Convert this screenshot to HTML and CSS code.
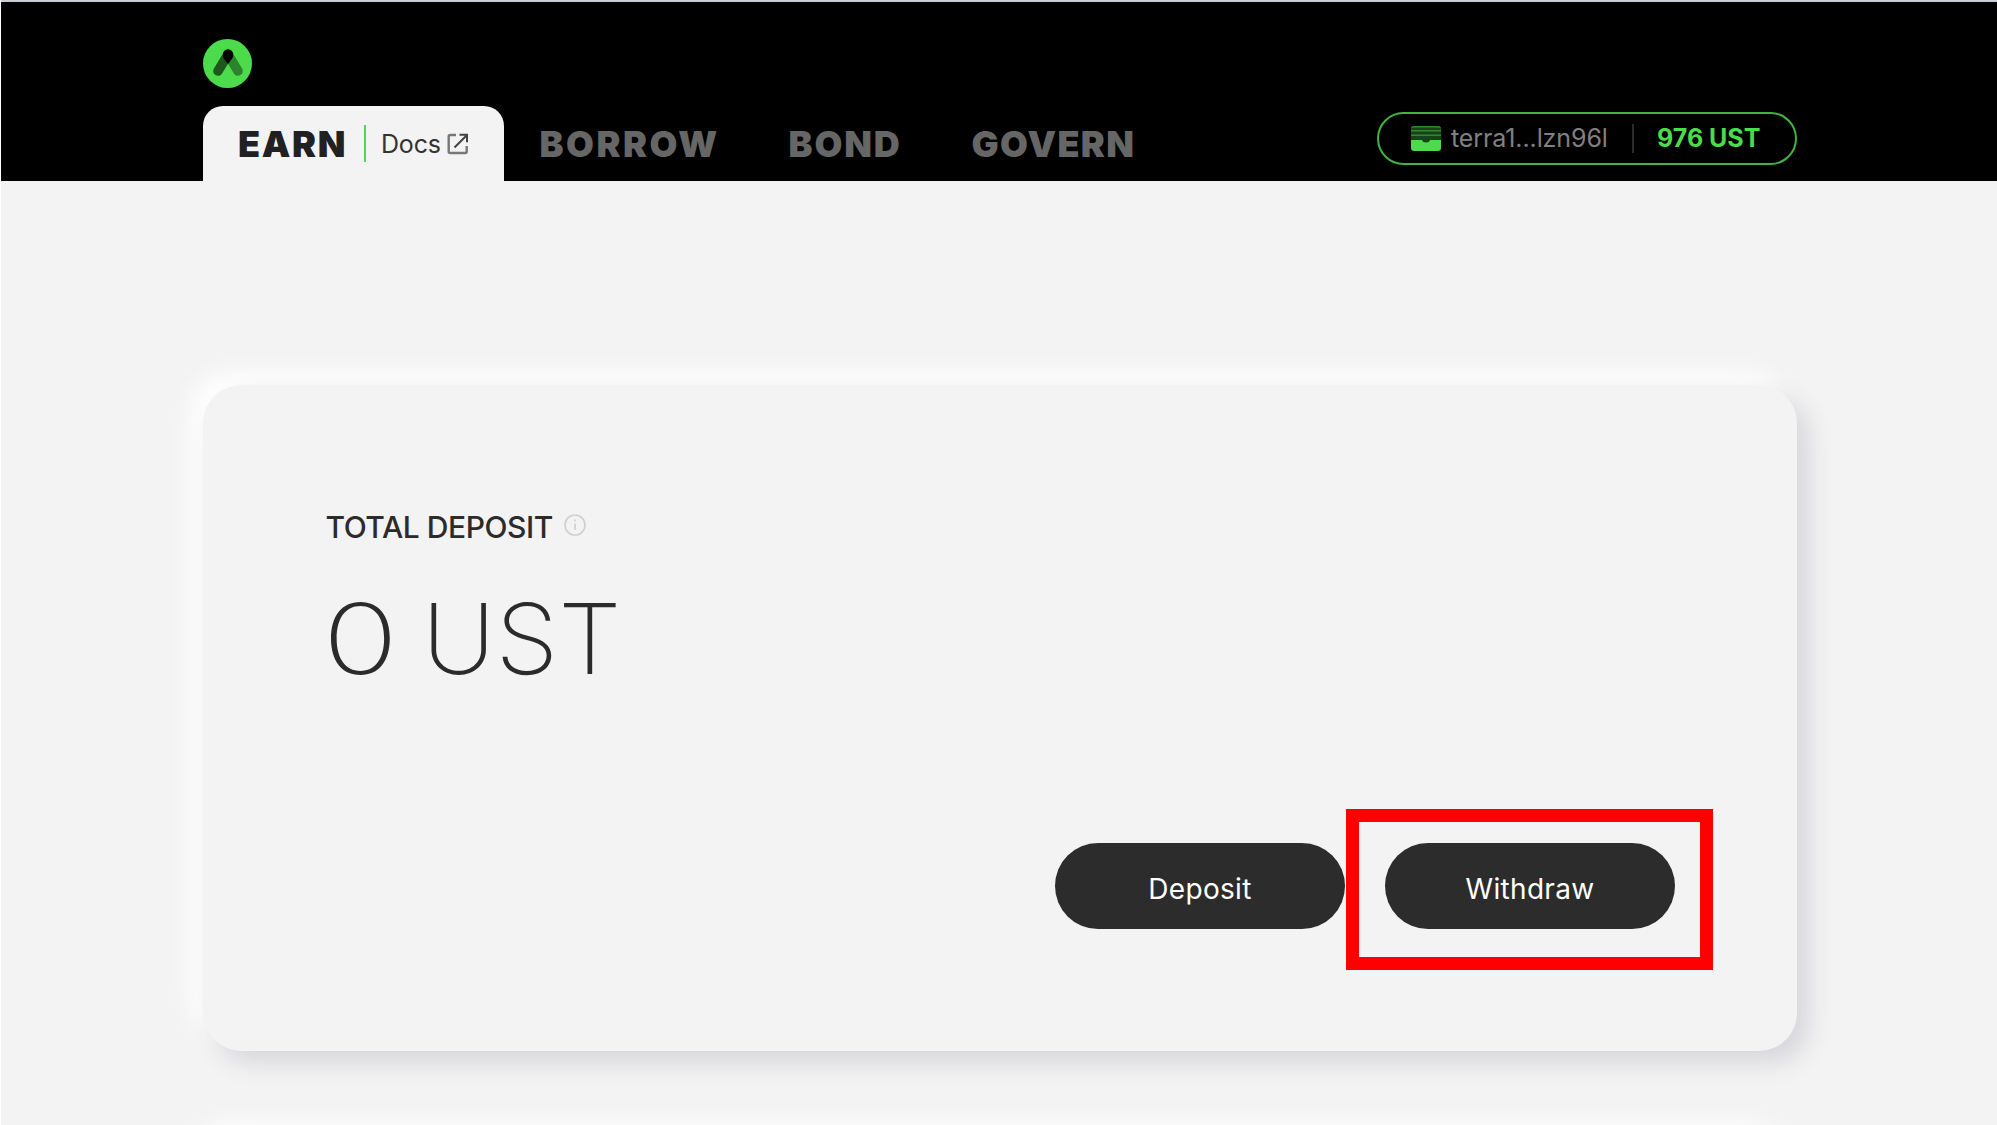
FILE: index.html
```
<!DOCTYPE html>
<html lang="en">
<head>
<meta charset="utf-8">
<title>Earn</title>
<link rel="stylesheet" href="styles.css">
</head>
<body>
<header class="header">
  <div class="container">
    <svg class="logo" viewBox="0 0 49 49">
      <circle cx="24.5" cy="24.5" r="24.5" fill="#4bdb4b"/>
      <path d="M25 15.5 35 32" stroke="#2d832d" stroke-width="9.600" stroke-linecap="round"/>
      <path d="M25 15.5 15 32" stroke="#1e571e" stroke-width="9.600" stroke-linecap="round"/>
      <path d="M19.800 15.5a5.200 5.200 0 0 1 10.400 0q0 2-1 4L25 25l-4.200-5.500q-1-2-1-4z" fill="#000"/>
    </svg>
    <div class="bar">
      <nav class="nav">
        <div class="tab">
          <a class="nav-item earn">EARN</a>
          <a class="docs">Docs
            <svg class="external" viewBox="0 0 22 22" fill="none" stroke="#777" stroke-width="2.4">
              <path d="M9 2H3.2Q1.7 2 1.7 3.5v15Q1.7 20 3.2 20h15q1.500 0 1.500-1.500V13"/>
              <path d="M12.500 1.800h7.500v7.500M19.500 2.500 7.500 14.500" stroke="#444" stroke-width="2"/>
            </svg>
          </a>
        </div>
        <a class="nav-item borrow">BORROW</a>
        <a class="nav-item bond">BOND</a>
        <a class="nav-item govern">GOVERN</a>
      </nav>
      <div class="wallet">
        <svg class="wallet-icon" viewBox="0 0 30 25">
          <rect width="30" height="20" rx="3" fill="#184318"/>
          <path d="M0 4V3Q0 0 3 0h24q3 0 3 3v1V3.500Q30 1.500 27 1.500H3Q0 1.500 0 3.500zM0 4h30v1.500H0zM0 8.500h30V10H0z" fill="#2f8a2f"/>
          <path d="M0 14h11q.5 2.500 4 2.500t4-2.500h11v8q0 3-3 3H3q-3 0-3-3z" fill="#4bdb4b"/>
        </svg>
        <span class="address">terra1...lzn96l</span>
        <span class="divider"></span>
        <span class="balance">976 UST</span>
      </div>
    </div>
  </div>
</header>
<main class="container">
  <section class="card deposit-card">
    <h2 class="title"><span>TOTAL DEPOSIT</span>
      <svg class="info" viewBox="0 0 22 22" fill="none" stroke="#d0d0d0" stroke-width="1.700">
        <circle cx="11" cy="11" r="10"/><path d="M11 9.500v6.500M11 5.500v2"/>
      </svg>
    </h2>
    <div class="amount"><span class="zero">0</span><span class="unit">UST</span></div>
    <div class="actions">
      <button class="button deposit">Deposit</button>
      <div class="highlighted"><button class="button withdraw">Withdraw</button></div>
    </div>
  </section>
  <section class="card next-card"></section>
</main>
</body>
</html>
```
FILE: styles.css
```
* { box-sizing: border-box; }
html { overflow: hidden; }
body {
  margin: 0;
  height: 1125px;
  overflow: hidden;
  background: #f3f3f3;
  border-left: 1px solid #fff;
  color: #2b2b2b;
  font-family: Inter, "Liberation Sans", sans-serif;
}
.container { width: 1594px; margin-left: 202px; }
.header {
  height: 181px;
  background: #000;
  border-top: 2px solid #c9ccd1;
  padding-top: 37px;
}
.logo { display: block; width: 49px; height: 49px; }
.bar { display: flex; justify-content: space-between; margin-top: 18px; }
.nav { display: flex; height: 75px; }
.nav-item {
  font-size: 36px;
  line-height: 77px;
  font-weight: 900;
  white-space: nowrap;
  color: #666;
}
.tab {
  display: flex;
  align-items: center;
  width: 301px;
  padding-left: 35px;
  background: #f3f3f3;
  border-radius: 20px 20px 0 0;
}
.earn { width: 126px; padding-top: 2px; color: #212121; letter-spacing: 1.7px; }
.borrow { width: 249px; margin-left: 35.5px; letter-spacing: 2.5px; }
.bond { width: 183px; letter-spacing: 1.9px; }
.govern { letter-spacing: 1.3px; }
.docs {
  display: flex;
  align-items: center;
  gap: 6px;
  height: 37px;
  padding-left: 15px;
  border-left: 2px solid #4bdb4b;
  font-size: 25px;
  letter-spacing: -0.2px;
  color: #333;
}
.external { width: 22px; height: 22px; }
.wallet {
  display: flex;
  align-items: center;
  width: 420px;
  height: 53px;
  margin-top: 6px;
  padding-left: 32px;
  padding-bottom: 1px;
  border: 2px solid #3eb53e;
  border-radius: 27px;
  font-size: 25px;
  white-space: nowrap;
}
.wallet-icon { width: 30px; height: 25px; margin-right: 10px; }
.address { width: 181px; color: #808080; font-weight: 400; letter-spacing: -0.1px; }
.divider { width: 2px; height: 29px; background: #2b2b2b; margin-right: 23px; }
.balance { font-size: 25px; font-weight: 700; color: #4bdb4b; }
.card {
  border-radius: 38px;
  background: #f3f3f3;
  box-shadow: 12px 12px 24px #d7d7dc, -12px -12px 24px #fff;
}
.deposit-card { height: 666px; margin-top: 204px; padding: 124px 84px 0 122.5px; }
.title {
  display: flex;
  align-items: flex-start;
  margin: 0;
  height: 36px;
  font-size: 30px;
  font-weight: 500;
  line-height: 36px;
  letter-spacing: -0.45px;
}
.title span { width: 238px; white-space: nowrap; }
.info { width: 22px; height: 22px; margin-top: 5px; }
.amount {
  display: flex;
  height: 120px;
  margin-top: 34px;
  font-size: 98px;
  font-weight: 160;
  line-height: 120px;
}
.zero { width: 96px; transform: translateX(-2px) scaleX(1.28); transform-origin: 5px 50%; }
.unit { transform: scaleX(1.03); transform-origin: left; }
.actions { display: flex; justify-content: flex-end; gap: 1px; margin-top: 110px; }
.button {
  display: block;
  width: 290px;
  height: 86px;
  padding: 5px 0 0;
  border: 0;
  border-radius: 43px;
  background: #2c2c2c;
  color: #fff;
  font: 400 28px Inter, sans-serif;
  letter-spacing: 0.3px;
}
.deposit { margin-top: 34px; }
.highlighted { width: 367px; height: 161px; border: 13px solid #f00; padding: 21px 26px; }
.next-card { height: 300px; margin-top: 84px; }
```
